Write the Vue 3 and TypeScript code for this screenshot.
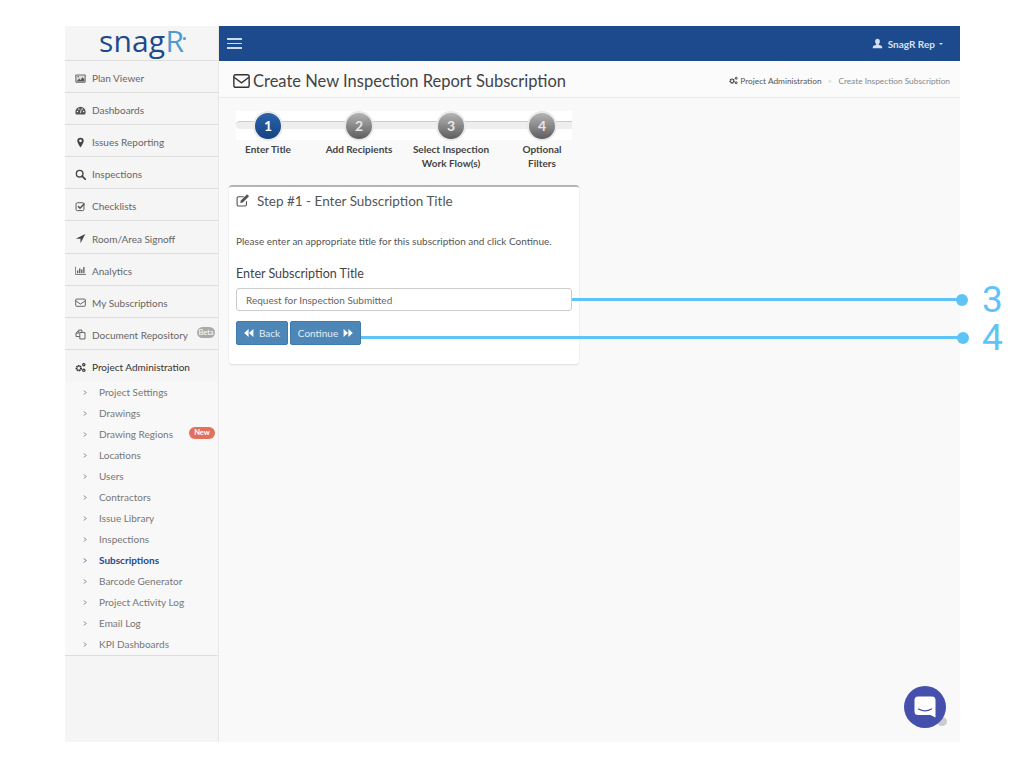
<script setup lang="ts">
interface NavItem { label: string; icon: string; badge?: string; strong?: boolean }
const nav: NavItem[] = [
  { label: 'Plan Viewer', icon: 'picture' },
  { label: 'Dashboards', icon: 'gauge' },
  { label: 'Issues Reporting', icon: 'marker' },
  { label: 'Inspections', icon: 'search' },
  { label: 'Checklists', icon: 'check' },
  { label: 'Room/Area Signoff', icon: 'arrow' },
  { label: 'Analytics', icon: 'chart' },
  { label: 'My Subscriptions', icon: 'mail' },
  { label: 'Document Repository', icon: 'files', badge: 'Beta' },
]
const subs = ['Project Settings', 'Drawings', 'Drawing Regions', 'Locations', 'Users', 'Contractors', 'Issue Library', 'Inspections', 'Subscriptions', 'Barcode Generator', 'Project Activity Log', 'Email Log', 'KPI Dashboards']
const steps = [
  { n: 1, lines: ['Enter Title'] },
  { n: 2, lines: ['Add Recipients'] },
  { n: 3, lines: ['Select Inspection', 'Work Flow(s)'] },
  { n: 4, lines: ['Optional', 'Filters'] },
]
</script>

<template>
  <div class="frame">
    <aside class="side">
      <div class="logo"><span class="logo-a">snag</span><span class="logo-b">R</span><span class="logo-dot"></span></div>
      <div v-for="item in nav" :key="item.label" class="nav">
        <svg class="ic" viewBox="0 0 16 16">
          <template v-if="item.icon === 'picture'">
            <rect x="0.5" y="2" width="15" height="12" rx="1.2" fill="#666" />
            <rect x="2" y="3.5" width="12" height="9" fill="#ddd" />
            <path d="M2.5 12l3.5-4 2 2 3-4 2.5 3v3z" fill="#555" /><circle cx="4.6" cy="5.6" r="1.1" fill="#555" />
          </template>
          <template v-else-if="item.icon === 'gauge'">
            <path d="M8 2.5a7.5 7.5 0 0 0-7.5 7.5c0 1.5.4 2.8 1.1 3.8h12.8c.7-1 1.100-2.300 1.100-3.800A7.500 7.500 0 0 0 8 2.500z" fill="#555" />
            <circle cx="3.500" cy="9.500" r="1" fill="#f5f5f5" /><circle cx="5.500" cy="5.800" r="1" fill="#f5f5f5" /><circle cx="10.500" cy="5.800" r="1" fill="#f5f5f5" /><circle cx="12.500" cy="9.500" r="1" fill="#f5f5f5" />
            <path d="M8 11.500l1-5" stroke="#f5f5f5" stroke-width="1.300" />
          </template>
          <path v-else-if="item.icon === 'marker'" fill-rule="evenodd" d="M8 1a4.700 4.700 0 0 0-4.700 4.700C3.300 8.500 8 15 8 15s4.700-6.500 4.700-9.300A4.700 4.700 0 0 0 8 1zm0 6.600a2 2 0 1 1 0-4 2 2 0 0 1 0 4z" fill="#444" />
          <g v-else-if="item.icon === 'search'" fill="none" stroke="#444" stroke-width="2">
            <circle cx="6.800" cy="6.800" r="4.800" /><path d="M10.300 10.300l4.500 4.500" stroke-width="2.400" stroke-linecap="round" />
          </g>
          <g v-else-if="item.icon === 'check'" fill="none" stroke="#555">
            <rect x="1.500" y="2.500" width="11.500" height="11.500" rx="2" stroke-width="1.400" />
            <path d="M4.300 7.500l3 3 6.500-7" stroke-width="2.200" />
          </g>
          <path v-else-if="item.icon === 'arrow'" d="M15 1.500L1 8.500h7v6.500z" fill="#444" />
          <g v-else-if="item.icon === 'chart'" fill="#555">
            <path d="M0.500 2.500h1v10.500h14.500v1H0.500z" />
            <rect x="3" y="8" width="1.800" height="4" /><rect x="6" y="5" width="1.800" height="7" /><rect x="9" y="6.500" width="1.800" height="5.500" /><rect x="12" y="3" width="1.800" height="9" />
          </g>
          <g v-else-if="item.icon === 'mail'" fill="none" stroke="#555" stroke-width="1.300">
            <rect x="1" y="3" width="14" height="10.500" rx="1.300" /><path d="M1 5.500l7 4.800 7-4.800" />
          </g>
          <g v-else fill="none" stroke="#555" stroke-width="1.300">
            <path d="M7 5h7.500v9.500H7z" /><path d="M7 11H1.500V6l4-4.500H10V5" /><path d="M5.500 2v4h-4" />
          </g>
        </svg>
        <span class="nav-label">{{ item.label }}</span>
        <span v-if="item.badge" class="badge beta">{{ item.badge }}</span>
      </div>
      <div class="nav nav-open">
        <svg class="ic" viewBox="0 0 16 16" fill="#333">
          <circle cx="5.500" cy="9" r="3.300" fill="none" stroke="#333" stroke-width="2.800" stroke-dasharray="2 0.600" />
          <circle cx="12.800" cy="4" r="1.700" fill="none" stroke="#333" stroke-width="1.700" />
          <circle cx="12.800" cy="12" r="1.700" fill="none" stroke="#333" stroke-width="1.700" />
        </svg>
        <span class="nav-label">Project Administration</span>
      </div>
      <ul class="subs">
        <li v-for="s in subs" :key="s" class="sub" :class="{ active: s === 'Subscriptions' }">
          <svg class="chev" viewBox="0 0 6 8"><path d="M1.500 1l3 3-3 3" fill="none" stroke="currentColor" stroke-width="1.300" /></svg>
          <span>{{ s }}</span>
          <span v-if="s === 'Drawing Regions'" class="badge new">New</span>
        </li>
      </ul>
    </aside>

    <div class="main">
      <header class="top">
        <div class="burger"><i></i><i></i><i></i></div>
        <div class="user">
          <svg class="user-ic" viewBox="0 0 14 14"><path d="M7 1c1.900 0 3 1.400 3 3.300 0 1.300-.6 2.500-1.400 3.200v1.100c1.800.6 4.400 1.300 4.400 3v1.400H1v-1.400c0-1.700 2.600-2.400 4.400-3V7.500C4.600 6.800 4 5.600 4 4.300 4 2.400 5.100 1 7 1z" fill="#d6e0ee" /></svg>
          <span>SnagR Rep</span><span class="caret"></span>
        </div>
      </header>
      <div class="head">
        <h1>
          <svg class="h-ic" viewBox="0 0 18 15"><rect x="0.800" y="0.800" width="16.400" height="13.400" rx="2" fill="none" stroke="#333" stroke-width="1.500" /><path d="M1 3.500l8 6 8-6" fill="none" stroke="#333" stroke-width="1.500" /></svg>
          Create New Inspection Report Subscription
        </h1>
        <div class="crumbs">
          <svg class="crumb-ic" viewBox="0 0 16 16"><circle cx="5.500" cy="9" r="3.300" fill="none" stroke="#333" stroke-width="2.800" stroke-dasharray="2 0.600" /><circle cx="12.800" cy="4" r="1.700" fill="none" stroke="#333" stroke-width="1.700" /><circle cx="12.800" cy="12" r="1.700" fill="none" stroke="#333" stroke-width="1.700" /></svg>
          <span class="crumb-a">Project Administration</span><span class="crumb-sep">&gt;</span><span class="crumb-b">Create Inspection Subscription</span>
        </div>
      </div>

      <div class="content">
        <div class="wizard">
          <div class="track"><div class="track-line"></div></div>
          <div class="steps">
            <div v-for="st in steps" :key="st.n" class="step" :class="'step-' + st.n">
              <div class="circle" :class="{ on: st.n === 1 }">{{ st.n }}</div>
              <div class="step-label"><div v-for="l in st.lines" :key="l">{{ l }}</div></div>
            </div>
          </div>
        </div>

        <section class="card">
          <h2>
            <svg class="edit-ic" viewBox="0 0 16 15" fill="none" stroke="#555"><path d="M12 8.500v3.500a1.800 1.800 0 0 1-1.800 1.800H3A1.800 1.800 0 0 1 1.200 12V5A1.800 1.800 0 0 1 3 3.200h6" stroke-width="1.300" /><path d="M5.500 7.500l-.7 3 3-.7 7.200-7.200-2.300-2.300z" fill="#555" stroke="none" /></svg>
            Step #1 - Enter Subscription Title
          </h2>
          <p class="intro">Please enter an appropriate title for this subscription and click Continue.</p>
          <label class="lbl" for="sub-title">Enter Subscription Title</label>
          <input id="sub-title" class="input" type="text" value="Request for Inspection Submitted" />
          <div class="btns">
            <button class="btn back" type="button">
              <svg class="btn-ic" viewBox="0 0 12 10"><path d="M5.500 0v10L0 5zM11.500 0v10L6 5z" fill="#fff" /></svg>Back
            </button>
            <button class="btn cont" type="button">Continue
              <svg class="btn-ic" viewBox="0 0 12 10"><path d="M0.500 0v10L6 5zM6.500 0v10L12 5z" fill="#fff" /></svg>
            </button>
          </div>
        </section>
      </div>
    </div>

    <div class="callout c3"><span class="dot"></span></div>
    <div class="callout c4"><span class="dot"></span></div>
    <span class="num n3">3</span>
    <span class="num n4">4</span>

    <div class="chat">
      <svg viewBox="0 0 24 24" class="chat-ic"><path d="M5 1.500h14A3.500 3.500 0 0 1 22.500 5v17.500l-5-2.500H5A3.500 3.500 0 0 1 1.500 16.500V5A3.500 3.500 0 0 1 5 1.500z" fill="#fff" /><path d="M5.500 14c4 2.300 9 2.300 13 0" fill="none" stroke="#4550ac" stroke-width="1.400" stroke-linecap="round" /></svg>
    </div>
    <div class="chat-shadow"></div>
  </div>
</template>

<style scoped>
.frame {
  position: relative;
  display: flex;
  width: 895px;
  height: 716px;
  margin: 26px 0 0 65px;
  font-family: Lato, "Liberation Sans", sans-serif;
  color: #555;
}
.side {
  width: 154px;
  flex: none;
  box-sizing: border-box;
  background: #f5f5f5;
  border-right: 1px solid #e8e8e8;
}
.logo {
  height: 35px;
  box-sizing: border-box;
  border-bottom: 1px solid #ddd;
  display: flex;
  align-items: center;
  justify-content: center;
  font-family: "Open Sans", sans-serif;
  font-size: 30px;
  letter-spacing: 0.2px;
  line-height: 1;
  padding: 0 0 5px 2px;
}
.logo-a { color: #1c4b8c; }
.logo-b { color: #4d9bd0; }
.logo-dot {
  width: 3px;
  height: 3px;
  border-radius: 50%;
  background: #4d9bd0;
  margin: -4px 0 0 -1px;
}
.nav {
  height: 32.1px;
  box-sizing: border-box;
  border-bottom: 1px solid #ddd;
  display: flex;
  align-items: center;
  padding: 3px 3px 0 10px;
  font-size: 10px;
  color: #666;
}
.ic { width: 11px; height: 11px; flex: none; margin-right: 6px; }
.nav-label { flex: 1; white-space: nowrap; }
.nav-open { color: #333; border-bottom: 0; }
.badge {
  flex: none;
  font-weight: 700;
  color: #fff;
  border-radius: 7px;
  font-size: 7.5px;
  line-height: 12px;
  text-align: center;
}
.beta { width: 18px; height: 11px; line-height: 11px; background: #aaa; margin: -4px 0 0 0; font-weight: 400; }
.subs {
  list-style: none;
  margin: 0;
  padding: 0;
  border-bottom: 1px solid #ddd;
  background: #f8f8f8;
}
.sub {
  height: 21px;
  display: flex;
  align-items: center;
  padding-left: 18px;
  font-size: 10px;
  color: #777;
  position: relative;
}
.chev { width: 4px; height: 7px; margin-right: 12px; flex: none; color: #666; }
.sub.active { color: #1d4a8c; font-weight: 700; }
.sub.active .chev { color: #1d4a8c; }
.new {
  position: absolute;
  right: 3px;
  top: 3px;
  width: 26px;
  height: 12px;
  background: #e4705c;
}
.main {
  flex: 1;
  min-width: 0;
  background: #f9f9f9;
  display: flex;
  flex-direction: column;
}
.top {
  height: 35px;
  flex: none;
  background: #1c4a8c;
  display: flex;
  align-items: center;
  justify-content: space-between;
  padding: 0 17px 0 8px;
}
.burger { width: 15px; display: flex; flex-direction: column; gap: 2.500px; }
.burger i { display: block; height: 1.700px; background: #cfdbeb; }
.user { display: flex; align-items: center; color: #d6e0ee; font-size: 10px; font-weight: 700; }
.user-ic { width: 11px; height: 11px; margin-right: 5px; }
.caret {
  width: 0;
  height: 0;
  border: 2.500px solid transparent;
  border-top-color: #d6e0ee;
  border-bottom: 0;
  margin-left: 4px;
}
.head {
  height: 37px;
  flex: none;
  box-sizing: border-box;
  background: #fbfbfb;
  border-bottom: 1px solid #e9e9e9;
  display: flex;
  align-items: center;
  justify-content: space-between;
  padding: 3px 10px 0 14px;
}
h1 {
  margin: 0;
  display: flex;
  align-items: center;
  gap: 3px;
  font-size: 16.500px;
  font-weight: 400;
  color: #444;
  white-space: nowrap;
}
.h-ic { width: 17px; height: 14px; flex: none; }
.crumbs { display: flex; align-items: center; font-size: 8.300px; white-space: nowrap; }
.crumb-ic { width: 9px; height: 9px; margin-right: 2px; }
.crumb-a { color: #555; }
.crumb-sep { color: #ccc; margin: 0 6px; }
.crumb-b { color: #888; }
.content { padding: 13px 0 0 10px; }
.wizard { position: relative; width: 350px; height: 74px; }
.track {
  position: absolute;
  left: 7px;
  top: 0;
  width: 336px;
  height: 29px;
  background: #fff;
}
.track-line {
  position: absolute;
  left: 0;
  right: 0;
  top: 10px;
  height: 8px;
  background: #eee;
  border-top: 1px solid #ccc;
  box-sizing: border-box;
  border-radius: 4px 0 0 4px;
}
.steps { position: absolute; inset: 0; }
.step { position: absolute; top: 0; width: 90px; display: flex; flex-direction: column; align-items: center; }
.step-1 { left: -6px; }
.step-2 { left: 85px; }
.step-3 { left: 177px; }
.step-4 { left: 268px; }
.circle {
  width: 26px;
  height: 26px;
  border-radius: 50%;
  background: linear-gradient(#b4b4b4, #5d5d5d);
  border: 2px solid #e9e9e9;
  color: #e6e6e6;
  font-size: 14px;
  font-weight: 700;
  line-height: 26px;
  text-align: center;
  box-sizing: content-box;
  flex: none;
}
.circle.on { background: linear-gradient(#2a63ad, #15437f); color: #fff; }
.step-label {
  margin-top: 1px;
  font-size: 10px;
  font-weight: 700;
  color: #444;
  line-height: 14px;
  text-align: center;
  white-space: nowrap;
}
.card {
  width: 350px;
  height: 179px;
  box-sizing: border-box;
  background: #fff;
  border-top: 2px solid #b5b5b5;
  border-radius: 3px;
  box-shadow: 0 1px 2px rgba(0, 0, 0, 0.12);
  padding: 0 7px;
}
h2 {
  margin: 0;
  padding-top: 5px;
  display: flex;
  align-items: center;
  gap: 7px;
  height: 18px;
  font-size: 13.500px;
  font-weight: 400;
  color: #555;
  white-space: nowrap;
}
.edit-ic { width: 14px; height: 13px; margin-top: -2px; flex: none; }
.intro { margin: 24px 0 0; font-size: 10px; line-height: 14px; color: #555; white-space: nowrap; }
.lbl { display: block; margin-top: 18px; font-size: 12.500px; line-height: 16px; color: #444; }
.input {
  display: block;
  width: 336px;
  height: 23px;
  box-sizing: border-box;
  margin-top: 6px;
  padding: 0 9px;
  font: 400 10px Lato, sans-serif;
  color: #666;
  background: #fff;
  border: 1px solid #ccc;
  border-radius: 3px;
}
.btns { display: flex; gap: 2px; margin-top: 10px; }
.btn {
  height: 24px;
  border: 1px solid #3f7cae;
  border-radius: 2px;
  background: #4d87b8;
  color: #e4edf5;
  font: 400 10px Lato, sans-serif;
  padding: 0;
  display: flex;
  align-items: center;
  justify-content: center;
  gap: 5px;
}
.back { width: 52px; }
.cont { width: 71px; }
.btn-ic { width: 10px; height: 8px; }
.callout { position: absolute; height: 3px; background: #5ec4f8; }
.c3 { left: 507px; width: 390px; top: 272px; }
.c4 { left: 296px; width: 602px; top: 310px; }
.dot {
  position: absolute;
  right: -6px;
  top: -4.500px;
  width: 12px;
  height: 12px;
  border-radius: 50%;
  background: #5ec4f8;
}
.num {
  position: absolute;
  left: 917px;
  font: 400 37px/30px Roboto, "Liberation Sans", sans-serif;
  color: #5ec4f8;
}
.n3 { top: 259px; }
.n4 { top: 297px; }
.chat {
  position: absolute;
  left: 839px;
  top: 660px;
  width: 42px;
  height: 42px;
  border-radius: 50%;
  background: #4550ac;
  display: flex;
  align-items: center;
  justify-content: center;
}
.chat-ic { width: 24px; height: 24px; }
.chat-shadow {
  position: absolute;
  left: 872px;
  top: 691px;
  width: 10px;
  height: 9px;
  background: #ccc;
  border-radius: 0 50% 50% 50%;
}
.chat { z-index: 1; }
</style>
